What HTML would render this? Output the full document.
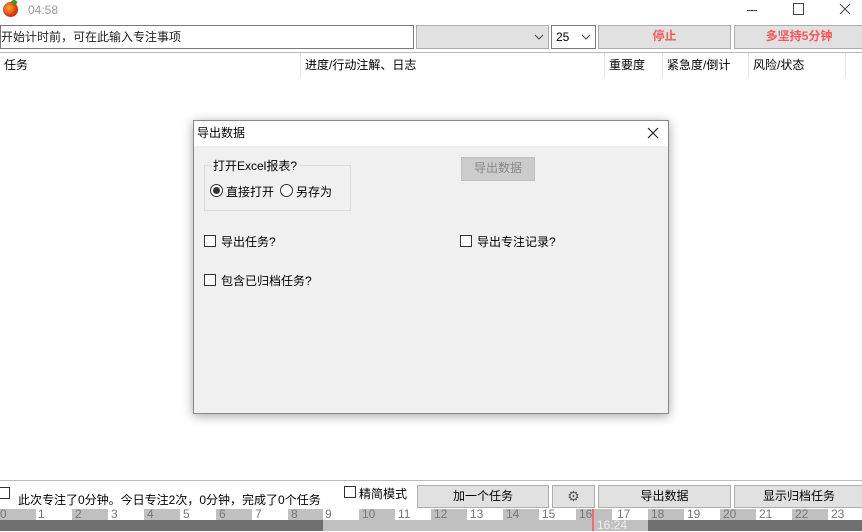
<!DOCTYPE html><html><head><meta charset="utf-8"><style>
*{box-sizing:border-box;margin:0;padding:0}
body{width:862px;height:531px;background:#fff;font-family:"Liberation Sans","Noto Sans CJK SC",sans-serif;font-size:12px;color:#000;position:relative;overflow:hidden}
.a{position:absolute}
.btn{position:absolute;background:#e1e1e1;border:1px solid #adadad;text-align:center;line-height:21px;font-size:12px}
.cb{position:absolute;width:12px;height:12px;border:1px solid #333;background:#fff}
.col{position:absolute;top:53px;height:25px;line-height:25px;padding-left:4px;border-right:1px solid #e5e5e5}
</style></head><body>
<div class="a" style="left:3px;top:2px;width:15px;height:15px;border-radius:50%;background:radial-gradient(circle at 40% 40%,#ffb020,#e03010 60%,#b01000)"></div>
<div class="a" style="left:11px;top:0;width:6px;height:5px;background:#3a9a20;border-radius:50%"></div>
<div class="a" style="left:28px;top:3px;color:#999;font-size:12px">04:58</div>
<svg class="a" style="left:740px;top:0" width="122" height="20"><g stroke="#444" stroke-width="1" fill="none"><path d="M7 10.5H17"/><path d="M53.5 3.5H63.5V14.5H53.5Z"/><path d="M100 4L110 14M110 4L100 14"/></g></svg>
<div class="a" style="left:0;top:25px;width:414px;height:24px;border:1px solid #7a7a7a;line-height:22px;padding-left:0;font-size:12px;color:#222">开始计时前，可在此输入专注事项</div>
<div class="a" style="left:416px;top:25px;width:133px;height:24px;background:#e1e1e1;border:1px solid #adadad"></div>
<svg class="a" style="left:534px;top:33px" width="10" height="8"><path d="M1 2L5 6L9 2" stroke="#444" fill="none"/></svg>
<div class="a" style="left:551px;top:25px;width:45px;height:24px;border:1px solid #7a7a7a;line-height:22px;padding-left:4px">25</div>
<svg class="a" style="left:581px;top:33px" width="10" height="8"><path d="M1 2L5 6L9 2" stroke="#444" fill="none"/></svg>
<div class="btn" style="left:598px;top:25px;width:133px;height:24px;color:#f55;font-weight:bold">停止</div>
<div class="btn" style="left:734px;top:25px;width:130px;height:24px;color:#f55;font-weight:bold">多坚持5分钟</div>
<div class="a" style="left:0;top:52px;width:862px;height:1px;background:#bbb"></div>
<div class="col" style="left:0;width:301px">任务</div>
<div class="col" style="left:301px;width:304px">进度/行动注解、日志</div>
<div class="col" style="left:605px;width:58px">重要度</div>
<div class="col" style="left:663px;width:86px">紧急度/倒计</div>
<div class="col" style="left:749px;width:97px">风险/状态</div>
<div class="a" style="left:193px;top:120px;width:476px;height:294px;background:#f0f0f0;border:1px solid #888;box-shadow:0 2px 10px rgba(0,0,0,.35)">
<div class="a" style="left:0;top:0;width:474px;height:25px;background:#fff;line-height:24px;padding-left:3px">导出数据</div>
<svg class="a" style="left:453px;top:6px" width="12" height="12"><path d="M1 1L11 11M11 1L1 11" stroke="#222" stroke-width="1.2"/></svg>
<div class="a" style="left:10px;top:44px;width:147px;height:46px;border:1px solid #dcdcdc"></div>
<div class="a" style="left:16px;top:36px;background:#f0f0f0;padding:0 3px">打开Excel报表?</div>
<div class="a" style="left:16px;top:63px;width:13px;height:13px;border:1px solid #333;border-radius:50%;background:#fff"><div style="margin:2px;width:7px;height:7px;border-radius:50%;background:#333"></div></div>
<div class="a" style="left:32px;top:62px">直接打开</div>
<div class="a" style="left:86px;top:63px;width:13px;height:13px;border:1px solid #333;border-radius:50%;background:#fff"></div>
<div class="a" style="left:102px;top:62px">另存为</div>
<div class="btn" style="left:267px;top:36px;width:74px;height:24px;background:#ccc;border-color:#bfbfbf;color:#888">导出数据</div>
<div class="cb" style="left:10px;top:114px"></div><div class="a" style="left:27px;top:112px">导出任务?</div>
<div class="cb" style="left:266px;top:114px"></div><div class="a" style="left:283px;top:112px">导出专注记录?</div>
<div class="cb" style="left:10px;top:153px"></div><div class="a" style="left:27px;top:151px">包含已归档任务?</div>
</div>
<div class="a" style="left:0;top:480px;width:862px;height:1px;background:#bbb"></div>
<div class="cb" style="left:-2px;top:487px"></div>
<div class="a" style="left:18px;top:491px">此次专注了0分钟。今日专注2次，0分钟，完成了0个任务</div>
<div class="cb" style="left:344px;top:486px"></div><div class="a" style="left:359px;top:485px">精简模式</div>
<div class="btn" style="left:417px;top:485px;width:132px;height:23px">加一个任务</div>
<div class="btn" style="left:552px;top:485px;width:43px;height:23px;font-size:14px;color:#555">⚙</div>
<div class="btn" style="left:598px;top:485px;width:133px;height:23px">导出数据</div>
<div class="btn" style="left:734px;top:485px;width:130px;height:23px">显示归档任务</div>
<div class="a" style="left:0;top:509px;width:862px;height:11px;font-size:12px;line-height:11px;color:#777">
<div class="a" style="left:0;width:36px;height:11px;background:#c0c0c0">0</div>
<div class="a" style="left:36px;width:36px;height:11px;padding-left:2px">1</div>
<div class="a" style="left:72px;width:36px;height:11px;background:#c0c0c0;padding-left:3px">2</div>
<div class="a" style="left:108px;width:36px;height:11px;padding-left:3px">3</div>
<div class="a" style="left:144px;width:36px;height:11px;background:#c0c0c0;padding-left:3px">4</div>
<div class="a" style="left:180px;width:36px;height:11px;padding-left:3px">5</div>
<div class="a" style="left:216px;width:36px;height:11px;background:#c0c0c0;padding-left:3px">6</div>
<div class="a" style="left:252px;width:36px;height:11px;padding-left:3px">7</div>
<div class="a" style="left:288px;width:35px;height:11px;background:#c0c0c0;padding-left:3px">8</div>
<div class="a" style="left:323px;width:36px;height:11px;padding-left:2px">9</div>
<div class="a" style="left:359px;width:36px;height:11px;background:#c0c0c0;padding-left:3px">10</div>
<div class="a" style="left:395px;width:36px;height:11px;padding-left:3px">11</div>
<div class="a" style="left:431px;width:36px;height:11px;background:#c0c0c0;padding-left:3px">12</div>
<div class="a" style="left:467px;width:36px;height:11px;padding-left:3px">13</div>
<div class="a" style="left:503px;width:36px;height:11px;background:#c0c0c0;padding-left:3px">14</div>
<div class="a" style="left:539px;width:37px;height:11px;padding-left:3px">15</div>
<div class="a" style="left:576px;width:36px;height:11px;background:#c0c0c0;padding-left:3px">16</div>
<div class="a" style="left:612px;width:36px;height:11px;padding-left:5px">17</div>
<div class="a" style="left:648px;width:36px;height:11px;background:#c0c0c0;padding-left:3px">18</div>
<div class="a" style="left:684px;width:36px;height:11px;padding-left:3px">19</div>
<div class="a" style="left:720px;width:36px;height:11px;background:#c0c0c0;padding-left:3px">20</div>
<div class="a" style="left:756px;width:36px;height:11px;padding-left:3px">21</div>
<div class="a" style="left:792px;width:36px;height:11px;background:#c0c0c0;padding-left:3px">22</div>
<div class="a" style="left:828px;width:34px;height:11px;padding-left:3px">23</div>
</div>
<div class="a" style="left:0;top:520px;width:323px;height:11px;background:#707070"></div>
<div class="a" style="left:323px;top:520px;width:325px;height:11px;background:#c0c0c0"></div>
<div class="a" style="left:648px;top:520px;width:214px;height:11px;background:#707070"></div>
<div class="a" style="left:597px;top:519px;color:#eee;font-size:12px;line-height:12px">16:24</div>
<div class="a" style="left:592px;top:509px;width:2px;height:22px;background:#f66"></div>
</body></html>
